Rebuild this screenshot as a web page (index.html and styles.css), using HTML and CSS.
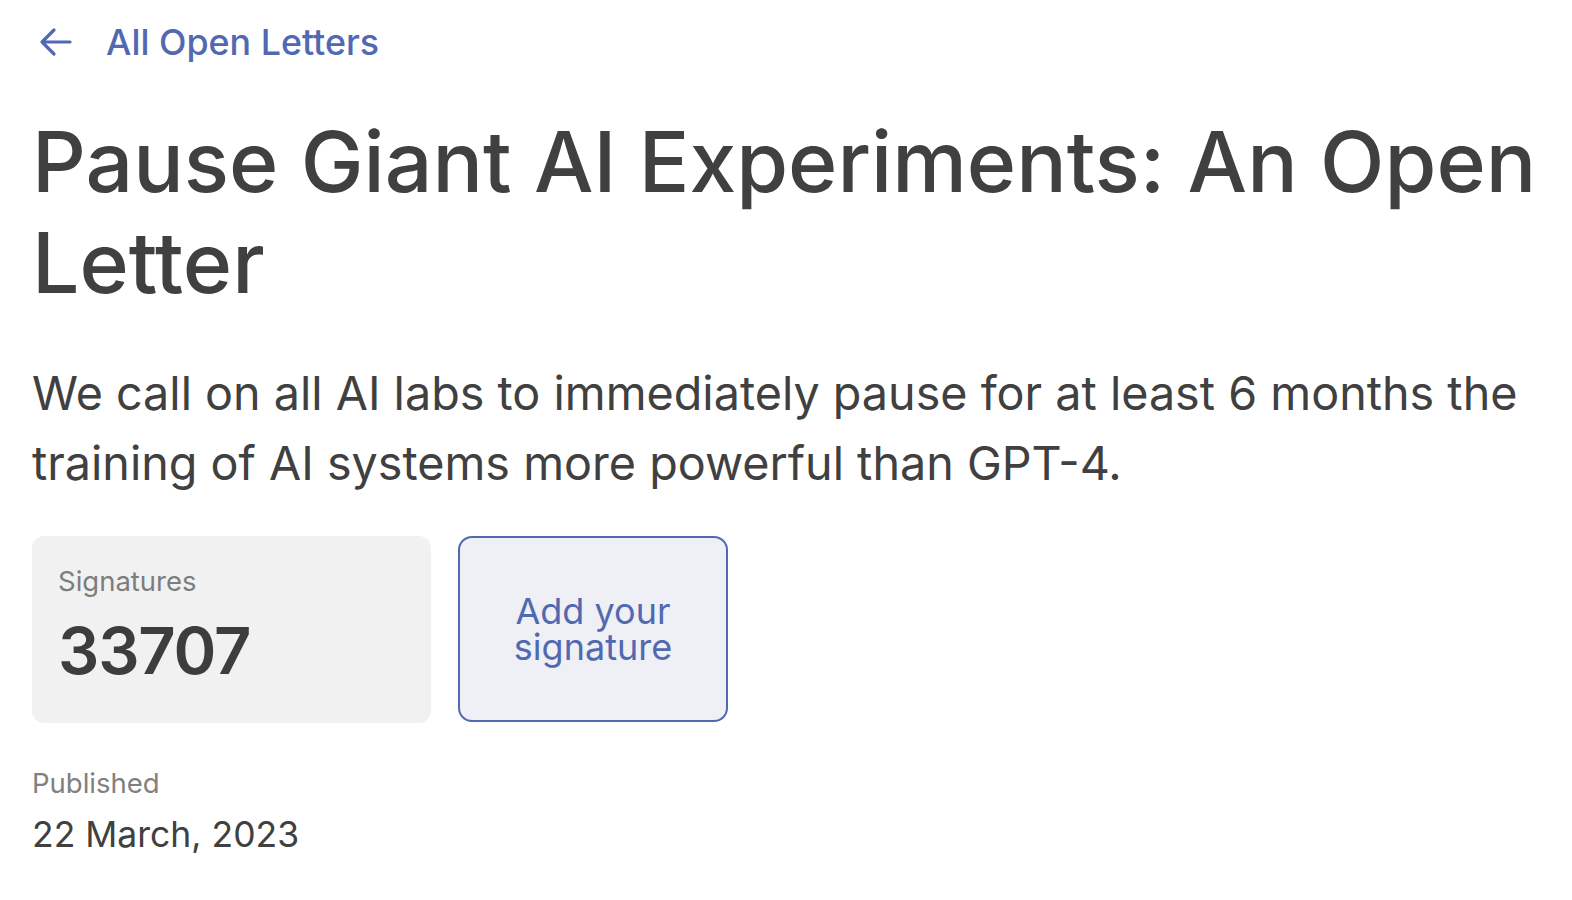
FILE: index.html
```html
<!DOCTYPE html>
<html lang="en">
<head>
<meta charset="utf-8">
<title>Pause Giant AI Experiments: An Open Letter</title>
<link rel="stylesheet" href="styles.css">
</head>
<body>
<main class="page">
  <a class="back" href="#">
    <svg class="back-icon" viewBox="0 0 34 30" width="34" height="30" aria-hidden="true">
      <path d="M32 15 H4 M16 3 L4 15 L16 27" fill="none" stroke="currentColor" stroke-width="3.2" stroke-linecap="round" stroke-linejoin="round"/>
    </svg>
    <span>All Open Letters</span>
  </a>
  <h1 class="title">Pause Giant AI Experiments: An Open Letter</h1>
  <p class="lead">We call on all AI labs to immediately pause for at least 6 months the training of AI systems more powerful than GPT-4.</p>
  <div class="stats">
    <div class="stat-card">
      <div class="stat-label">Signatures</div>
      <div class="stat-value">33707</div>
    </div>
    <a class="sign-btn" href="#"><span class="sign-line">Add your</span><span class="sign-line">signature</span></a>
  </div>
  <div class="meta">
    <div class="meta-label">Published</div>
    <div class="meta-value">22 March, 2023</div>
  </div>
</main>
</body>
</html>
```
FILE: styles.css
```css
* { box-sizing: border-box; }
html, body { margin: 0; background: #ffffff; }
body {
  font-family: Inter, "Noto Sans", "Liberation Sans", sans-serif;
  color: #404040;
}
.page {
  padding: 22px 32px 0 32px;
}
.back {
  display: flex;
  align-items: center;
  gap: 34px;
  color: #5169b0;
  text-decoration: none;
  font-size: 35.8px;
  font-weight: 500;
  line-height: 40px;
  padding-left: 6px;
}
.back-icon { display: block; flex: none; }
.title {
  margin: 49px 0 0 0;
  font-size: 84px;
  font-weight: 500;
  line-height: 101px;
  color: #404040;
}
.lead {
  margin: 45px 0 0 0;
  font-size: 46.7px;
  font-weight: 400;
  line-height: 70px;
  color: #404040;
}
.stats {
  display: flex;
  gap: 27px;
  margin-top: 38px;
}
.stat-card {
  width: 399px;
  height: 187px;
  background: #f1f1f2;
  border-radius: 12px;
  padding: 28px 26px;
}
.stat-label {
  font-size: 27.5px;
  color: #7d7d7d;
  line-height: 34px;
}
.stat-value {
  font-size: 65px;
  font-weight: 600;
  letter-spacing: -1.2px;
  color: #3d3d3d;
  line-height: 80px;
  margin-top: 13px;
}
.sign-btn {
  width: 270px;
  height: 186px;
  border: 2px solid #5169b0;
  border-radius: 14px;
  background: #eef0f5;
  color: #5169b0;
  text-decoration: none;
  display: flex;
  flex-direction: column;
  align-items: center;
  justify-content: center;
  text-align: center;
  font-size: 36px;
  line-height: 36px;
  font-weight: 400;
}
.sign-line { display: block; }
.meta { margin-top: 42px; }
.meta-label {
  font-size: 27.5px;
  color: #808080;
  line-height: 36px;
}
.meta-value {
  font-size: 35.5px;
  color: #404040;
  line-height: 44px;
  margin-top: 12px;
}
```
